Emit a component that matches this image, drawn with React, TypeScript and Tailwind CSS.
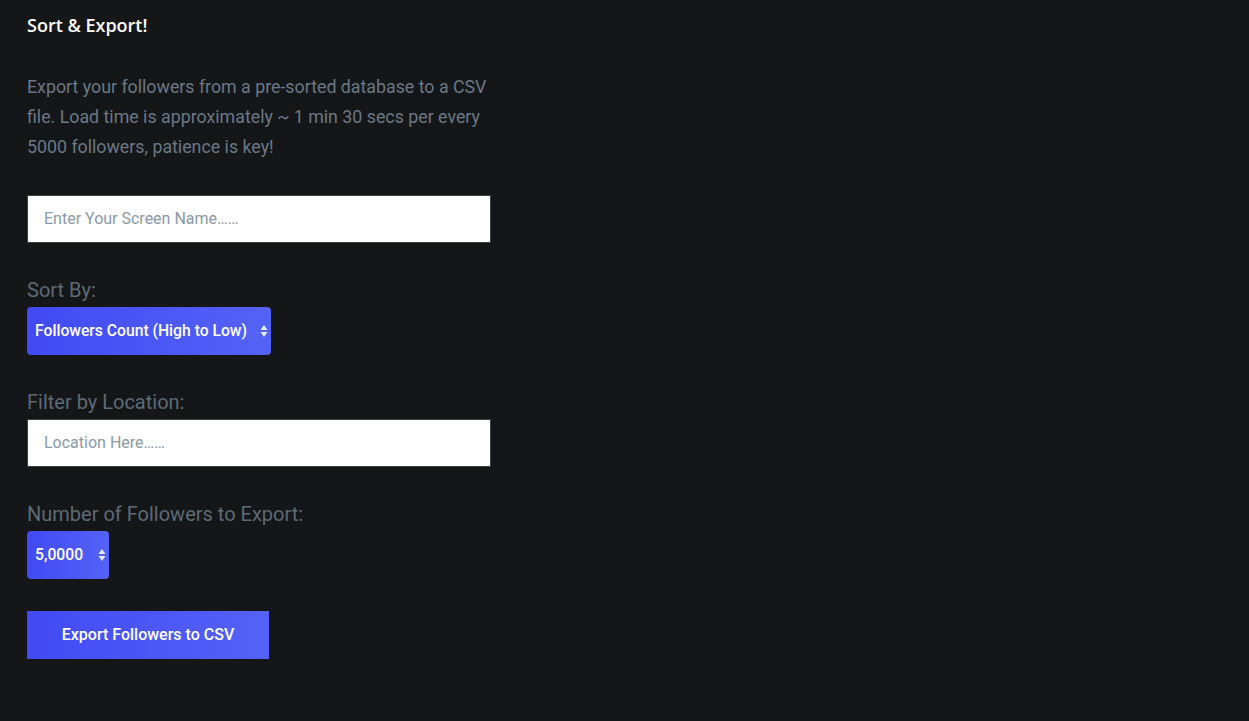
import React from "react";

function Arrows() {
  return (
    <svg width="8" height="14" viewBox="0 0 8 14" className="shrink-0">
      <path d="M4 1 L7.5 6 L0.5 6 Z" fill="#e8eaff" />
      <path d="M4 13 L7.5 8 L0.5 8 Z" fill="#e8eaff" />
    </svg>
  );
}

function SelectBox({ label, width }: { label: string; width: string }) {
  return (
    <div
      className={`flex h-[48px] ${width} items-center justify-between rounded-[4px] bg-gradient-to-r from-[#4249f5] to-[#5462f6] pl-[8px] pr-[3px] text-[15.7px] font-medium text-white`}
    >
      <span>{label}</span>
      <Arrows />
    </div>
  );
}

export default function App() {
  return (
    <div
      className="min-h-[721px] w-full bg-[#151618] pl-[27px] pt-[12px]"
      style={{ fontFamily: "Roboto, 'Noto Sans', sans-serif" }}
    >
      <h1
        className="text-[18px] font-semibold leading-[26px] text-white"
        style={{ fontFamily: "'Open Sans', 'Noto Sans', sans-serif" }}
      >
        Sort &amp; Export!
      </h1>
      <p className="mt-[34px] w-[470px] text-[17.8px] leading-[30px] text-[#6a7887]">
        Export your followers from a pre-sorted database to a CSV file. Load time is approximately ~ 1 min 30 secs per every 5000 followers, patience is key!
      </p>
      <input
        className="mt-[33px] block h-[48px] w-[464px] border border-[#3b3e42] bg-white pl-[16px] pr-[16px] pb-[2px] text-[16px] text-[#333] outline-none placeholder:text-[#8a99a7]"
        placeholder="Enter Your Screen Name……"
      />
      <div className="mt-[35px] text-[20px] leading-[24px] text-[#5d6a77]">Sort By:</div>
      <div className="mt-[5px]">
        <SelectBox label="Followers Count (High to Low)" width="w-[244px]" />
      </div>
      <div className="mt-[35px] text-[20px] leading-[24px] text-[#5d6a77]">Filter by Location:</div>
      <input
        className="mt-[5px] block h-[48px] w-[464px] border border-[#3b3e42] bg-white pl-[16px] pr-[16px] pb-[2px] text-[16px] text-[#333] outline-none placeholder:text-[#8a99a7]"
        placeholder="Location Here……"
      />
      <div className="mt-[35px] text-[20px] leading-[24px] text-[#5d6a77]">Number of Followers to Export:</div>
      <div className="mt-[5px]">
        <SelectBox label="5,0000" width="w-[82px]" />
      </div>
      <button className="mt-[32px] flex h-[48px] w-[242px] items-center justify-center bg-gradient-to-r from-[#4249f5] to-[#5462f6] text-[16px] font-medium text-white">
        Export Followers to CSV
      </button>
    </div>
  );
}
